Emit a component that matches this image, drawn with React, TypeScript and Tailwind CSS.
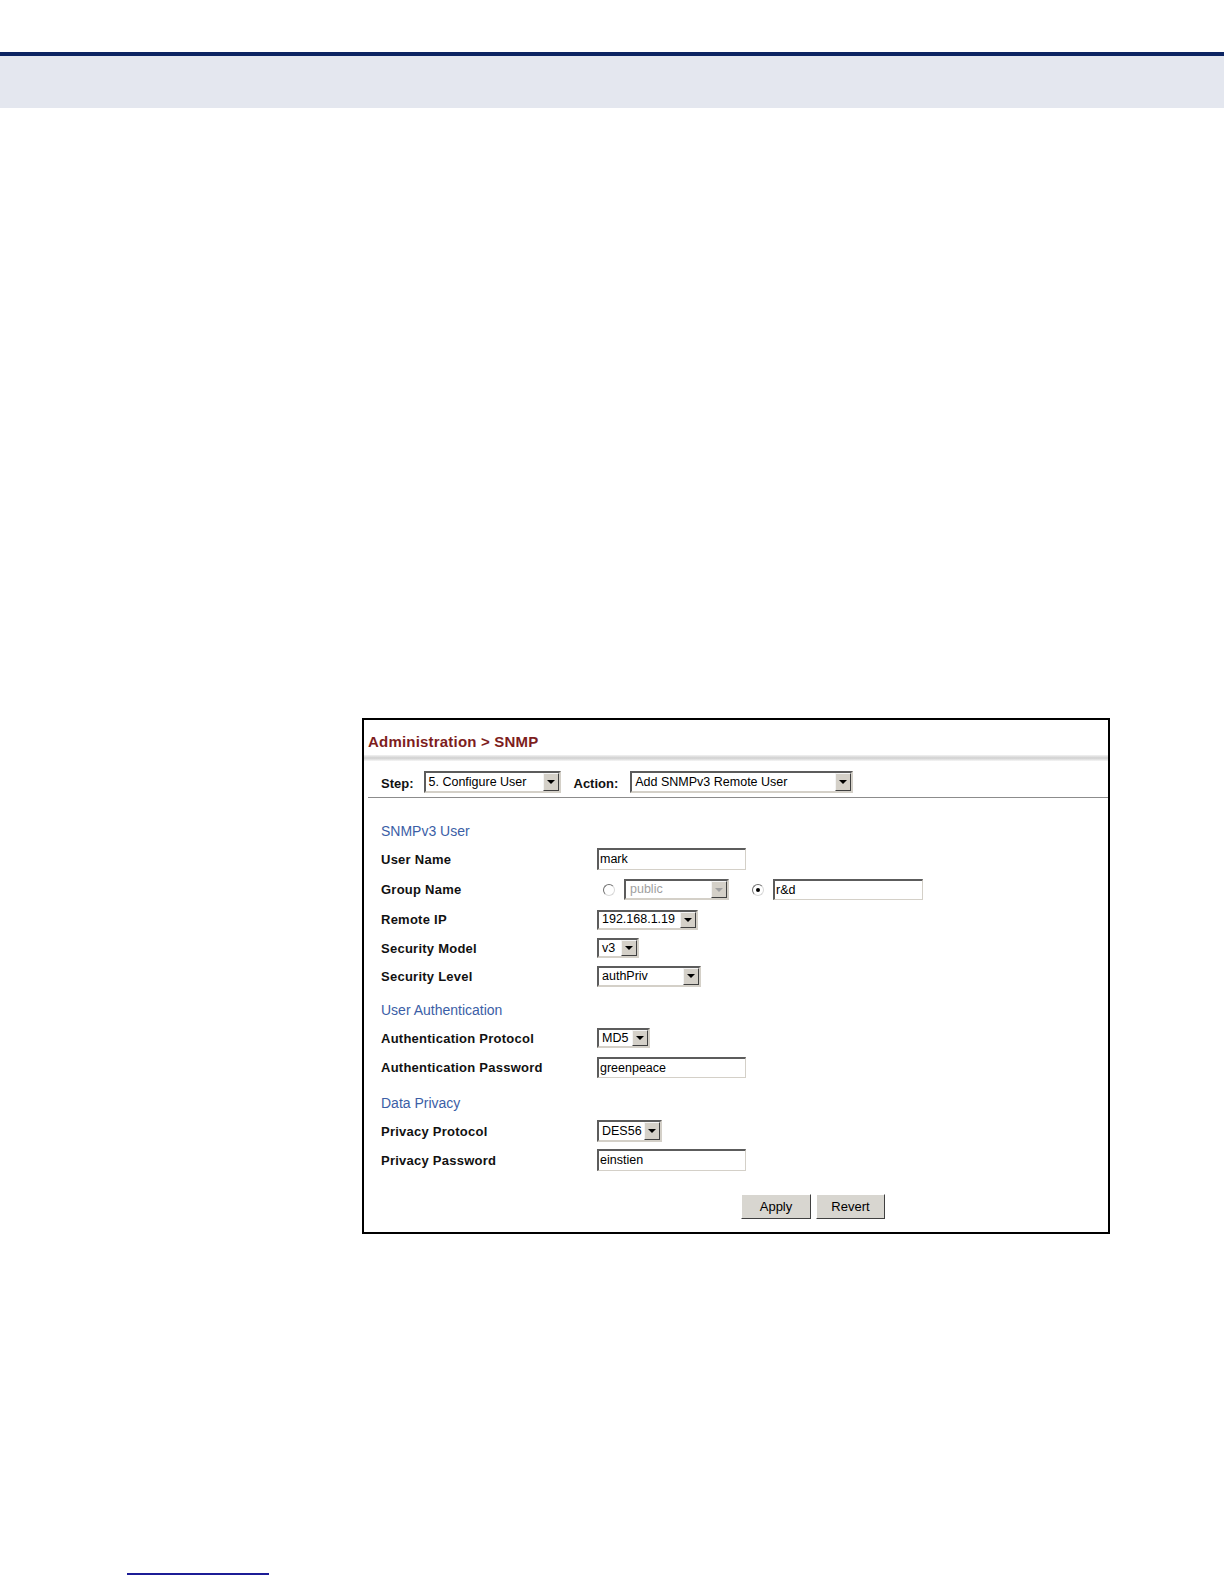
import React from 'react';

const font = "font-['Liberation_Sans',Arial,sans-serif]";

function Arrow({ disabled }: { disabled?: boolean }) {
  return (
    <div className="ml-auto flex h-full w-[16px] shrink-0 items-center justify-center border border-t-[#f4f4f4] border-l-[#f4f4f4] border-b-[#404040] border-r-[#404040] bg-[#d4d0c8]">
      <span
        className={
          disabled
            ? 'block h-0 w-0 border-x-[4px] border-t-[4px] border-x-transparent border-t-[#a0a0a0]'
            : 'block h-0 w-0 border-x-[4px] border-t-[4px] border-x-transparent border-t-black'
        }
      />
    </div>
  );
}

function Select({ box, text, disabled }: { box: string; text: string; disabled?: boolean }) {
  return (
    <div className={`flex items-center border-2 border-t-[#5c5c5c] border-l-[#5c5c5c] border-b-[#d4d0c8] border-r-[#d4d0c8] bg-white ${box}`}>
      <span className={disabled ? 'pl-[4px] text-[12.5px] leading-none text-[#a0a0a0]' : 'pl-[3px] text-[12.5px] leading-none text-black'}>
        {text}
      </span>
      <Arrow disabled={disabled} />
    </div>
  );
}

function Input({ box, value }: { box: string; value: string }) {
  return (
    <div className={`flex items-center border-t-2 border-l-2 border-b border-r border-t-[#5c5c5c] border-l-[#5c5c5c] border-b-[#d4d0c8] border-r-[#d4d0c8] bg-white ${box}`}>
      <span className="pl-[1px] text-[12.5px] leading-none text-black">{value}</span>
    </div>
  );
}

function Radio({ checked }: { checked?: boolean }) {
  return (
    <span className="flex h-[12px] w-[12px] items-center justify-center rounded-full border border-t-[#707070] border-l-[#707070] border-b-[#d8d8d8] border-r-[#d8d8d8] bg-white">
      {checked && <span className="block h-[4px] w-[4px] rounded-full bg-black" />}
    </span>
  );
}

function Row({ label, h, children }: { label: string; h: string; children: React.ReactNode }) {
  return (
    <div className={`flex items-center ${h}`}>
      <div className="w-[216px] text-[13px] font-bold leading-none tracking-[0.25px] text-[#111]">{label}</div>
      {children}
    </div>
  );
}

function Heading({ title, cls }: { title: string; cls: string }) {
  return <div className={`flex items-center text-[14px] leading-none text-[#3b5ea6] ${cls}`}>{title}</div>;
}

function SnmpPanel() {
  return (
    <div className="ml-[362px] mt-[610px] h-[516px] w-[748px] border-2 border-black bg-white">
      <div className="h-[35px] pl-[4px] pt-[13px] text-[15px] font-bold leading-[17px] tracking-[0.2px] text-[#7d1d1d]">
        Administration &gt; SNMP
      </div>
      <div className="h-[6px] bg-gradient-to-b from-[#f2f2f2] via-[#cfcfcf] to-[#f6f6f6]" />
      <div className="flex h-[36px] items-end pb-[4px] pl-[17px]">
        <span className="pb-[1px] text-[13px] font-bold leading-[16px] text-[#111]">Step:</span>
        <Select box="ml-[10px] h-[22px] w-[137px]" text="5. Configure User" />
        <span className="ml-[13px] pb-[1px] text-[13px] font-bold leading-[16px] text-[#111]">Action:</span>
        <Select box="ml-[12px] h-[22px] w-[223px]" text="Add SNMPv3 Remote User" />
      </div>
      <div className="ml-[4px] h-px bg-[#8c8c8c]" />

      <div className="pl-[17px] pt-[20px]">
        <Heading title="SNMPv3 User" cls="h-[26px]" />
        <Row label="User Name" h="h-[30px]">
          <Input box="h-[22px] w-[149px]" value="mark" />
        </Row>
        <Row label="Group Name" h="h-[31px]">
          <div className="flex items-center">
            <span className="ml-[6px]"><Radio /></span>
            <Select box="ml-[9px] h-[21px] w-[105px]" text="public" disabled />
            <span className="ml-[23px]"><Radio checked /></span>
            <Input box="ml-[9px] h-[21px] w-[150px]" value="r&d" />
          </div>
        </Row>
        <Row label="Remote IP" h="h-[29px]">
          <Select box="h-[20px] w-[101px]" text="192.168.1.19" />
        </Row>
        <Row label="Security Model" h="h-[28px]">
          <Select box="h-[20px] w-[42px]" text="v3" />
        </Row>
        <Row label="Security Level" h="h-[28px]">
          <Select box="h-[21px] w-[104px]" text="authPriv" />
        </Row>

        <Heading title="User Authentication" cls="mt-[6px] h-[28px]" />
        <Row label="Authentication Protocol" h="h-[28px]">
          <Select box="h-[20px] w-[53px]" text="MD5" />
        </Row>
        <Row label="Authentication Password" h="h-[31px]">
          <Input box="h-[21px] w-[149px]" value="greenpeace" />
        </Row>

        <Heading title="Data Privacy" cls="mt-[6px] h-[28px]" />
        <Row label="Privacy Protocol" h="h-[28px]">
          <Select box="h-[22px] w-[65px]" text="DES56" />
        </Row>
        <Row label="Privacy Password" h="h-[30px]">
          <Input box="h-[22px] w-[149px]" value="einstien" />
        </Row>

        <div className="ml-[360px] mt-[19px] flex gap-[5px]">
          <button className="h-[25px] w-[70px] border border-t-white border-l-white border-b-[#404040] border-r-[#404040] bg-[#d8d6d0] text-[13px] leading-none text-black">
            Apply
          </button>
          <button className="h-[25px] w-[69px] border border-t-white border-l-white border-b-[#404040] border-r-[#404040] bg-[#d8d6d0] text-[13px] leading-none text-black">
            Revert
          </button>
        </div>
      </div>
    </div>
  );
}

export default function App() {
  return (
    <div className={`h-[1584px] w-[1224px] overflow-hidden bg-white ${font}`}>
      <div className="mt-[52px] h-[4px] bg-[#0c2462]" />
      <div className="h-[52px] bg-[#e4e7ef]" />
      <SnmpPanel />
      <div className="ml-[127px] mt-[339px] h-[2px] w-[142px] bg-[#1c1c96]" />
    </div>
  );
}
